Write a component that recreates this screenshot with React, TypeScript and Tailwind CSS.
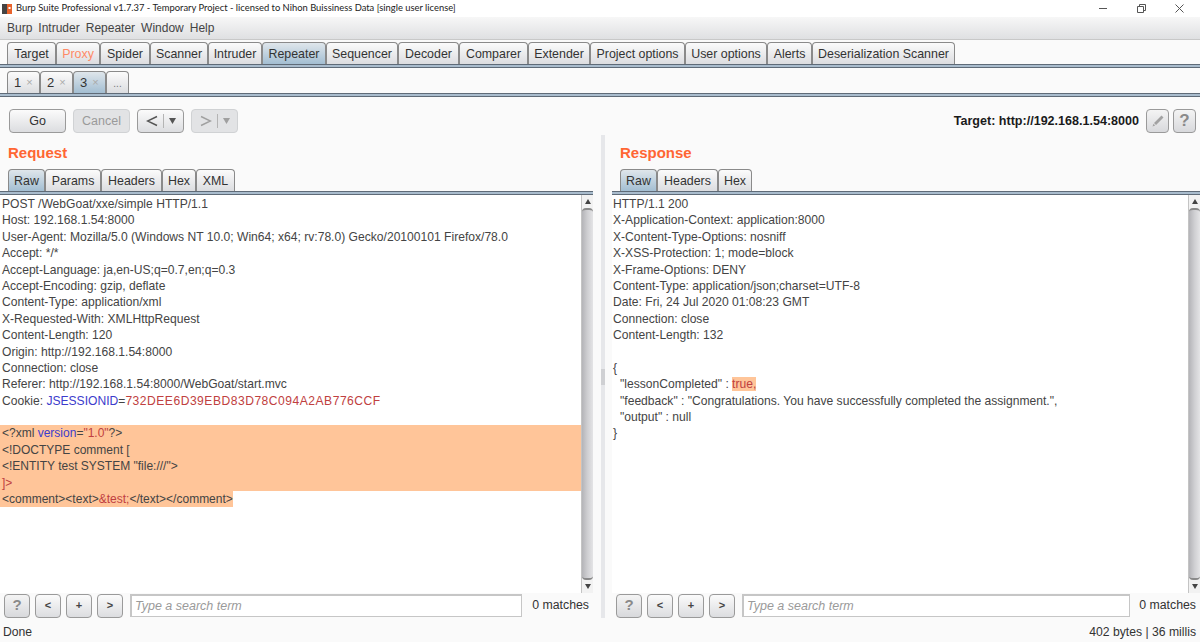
import React from 'react';

const mainTabs = [
  { label: 'Target', w: 'w-[49px]' },
  { label: 'Proxy', w: 'w-[44px]', orange: true },
  { label: 'Spider', w: 'w-[50px]' },
  { label: 'Scanner', w: 'w-[58px]' },
  { label: 'Intruder', w: 'w-[54px]' },
  { label: 'Repeater', w: 'w-[64px]', active: true },
  { label: 'Sequencer', w: 'w-[72px]' },
  { label: 'Decoder', w: 'w-[61px]' },
  { label: 'Comparer', w: 'w-[69px]' },
  { label: 'Extender', w: 'w-[62px]' },
  { label: 'Project options', w: 'w-[95px]' },
  { label: 'User options', w: 'w-[82px]' },
  { label: 'Alerts', w: 'w-[45px]' },
  { label: 'Deserialization Scanner', w: 'w-[143px]' },
];

const requestLines = [
  'POST /WebGoat/xxe/simple HTTP/1.1',
  'Host: 192.168.1.54:8000',
  'User-Agent: Mozilla/5.0 (Windows NT 10.0; Win64; x64; rv:78.0) Gecko/20100101 Firefox/78.0',
  'Accept: */*',
  'Accept-Language: ja,en-US;q=0.7,en;q=0.3',
  'Accept-Encoding: gzip, deflate',
  'Content-Type: application/xml',
  'X-Requested-With: XMLHttpRequest',
  'Content-Length: 120',
  'Origin: http://192.168.1.54:8000',
  'Connection: close',
  'Referer: http://192.168.1.54:8000/WebGoat/start.mvc',
];

const responseLines = [
  'HTTP/1.1 200',
  'X-Application-Context: application:8000',
  'X-Content-Type-Options: nosniff',
  'X-XSS-Protection: 1; mode=block',
  'X-Frame-Options: DENY',
  'Content-Type: application/json;charset=UTF-8',
  'Date: Fri, 24 Jul 2020 01:08:23 GMT',
  'Connection: close',
  'Content-Length: 132',
];

function Tab({ label, w, active, orange }: { label: string; w: string; active?: boolean; orange?: boolean }) {
  return (
    <div
      className={`${w} h-full flex items-center justify-center pt-[2px] rounded-t-[4px] border border-b-0 border-[#8a8a8a] text-[12.4px] ${
        active ? 'bg-gradient-to-b from-[#dfe6eb] to-[#a3bed2]' : 'bg-gradient-to-b from-[#fbfbfb] to-[#dcdde0]'
      } ${orange ? 'text-[#ff8a66]' : 'text-[#333333]'}`}
    >
      {label}
    </div>
  );
}

function TabLine() {
  return <div className="h-[4px] border-y border-[#5f6b78] bg-[#a9bccd]" />;
}

function Btn({ w, children, disabled }: { w: string; children: React.ReactNode; disabled?: boolean }) {
  return (
    <div
      className={`${w} h-[24px] flex items-center justify-center rounded-[4px] border text-[12.5px] ${
        disabled
          ? 'border-[#d0d2d4] bg-[#e2e3e5] text-[#9a9a9a]'
          : 'border-[#9a9a9a] bg-gradient-to-b from-[#fbfbfb] to-[#dcdde0] text-[#333333]'
      }`}
    >
      {children}
    </div>
  );
}

function SmallBtn({ w, children }: { w: string; children: React.ReactNode }) {
  return (
    <div className={`${w} h-[24px] flex items-center justify-center rounded-[4px] border border-[#9a9a9a] bg-gradient-to-b from-[#fbfbfb] to-[#dcdde0] text-[11px] font-bold text-[#444444]`}>
      {children}
    </div>
  );
}

function ArrowBtn({ dir, disabled }: { dir: 'left' | 'right'; disabled?: boolean }) {
  const stroke = disabled ? '#a0a0a0' : '#555555';
  return (
    <Btn w="w-[47px]" disabled={disabled}>
      <svg width="12" height="12" viewBox="0 0 12 12" fill="none">
        <path d={dir === 'left' ? 'M11 1.5 1.5 6 11 10.5' : 'M1 1.5 10.5 6 1 10.5'} stroke={stroke} strokeWidth="1.4" />
      </svg>
      <span className="mx-[5px] h-[14px] w-px bg-[#b4b4b4]" />
      <svg width="7" height="6" viewBox="0 0 7 6">
        <path d="M0 0h7L3.5 6z" fill={stroke} />
      </svg>
    </Btn>
  );
}

function ScrollBar() {
  return (
    <div className="w-[12px] h-full flex flex-col border-l border-[#c4c4c4] bg-[#f2f2f2]">
      <div className="h-[13px] flex items-center justify-center">
        <svg width="6" height="5" viewBox="0 0 6 5"><path d="M3 0l3 5H0z" fill="#444444" /></svg>
      </div>
      <div className="flex-1 rounded-[4px] border-y-2 border-[#8a8a8a] bg-gradient-to-r from-[#b4b4b8] via-[#cfcfd2] to-[#e4e4e6]" />
      <div className="h-[13px] flex items-center justify-center">
        <svg width="6" height="5" viewBox="0 0 6 5"><path d="M0 0h6L3 5z" fill="#444444" /></svg>
      </div>
    </div>
  );
}

function SearchRow({ inputW }: { inputW: string }) {
  return (
    <div className="h-[25px] flex items-center bg-[#fafafa]">
      <div className="flex items-center gap-[5px] pl-[4px]">
        <div className="w-[26px] h-[24px] flex items-center justify-center rounded-[4px] border border-[#9a9a9a] bg-gradient-to-b from-[#f4f4f4] to-[#d8d9dc] text-[15px] font-bold text-[#8a8a8a]">?</div>
        <SmallBtn w="w-[26px]">&lt;</SmallBtn>
        <SmallBtn w="w-[26px]">+</SmallBtn>
        <SmallBtn w="w-[26px]">&gt;</SmallBtn>
      </div>
      <div className={`${inputW} ml-[7px] h-[23px] flex items-center border border-[#c6c6c6] border-t-2 border-l-2 bg-white pl-[3px] text-[12.5px] italic text-[#9a9a9a]`}>
        Type a search term
      </div>
      <div className="flex-1 pr-[4px] text-right text-[12.3px] text-[#333333]">0 matches</div>
    </div>
  );
}

export default function App() {
  return (
    <div className="w-[1200px] h-[642px] overflow-hidden flex flex-col bg-[#fafafa] font-['Liberation_Sans',Arial,sans-serif] text-[#333333]">
      {/* title bar */}
      <div className="h-[17px] flex items-center bg-white">
        <svg width="12" height="12" viewBox="0 0 12 12" className="ml-[1px] mr-[3px]">
          <rect x="1" y="1" width="5" height="10" fill="#444444" />
          <rect x="6" y="1" width="5" height="10" fill="#e8632c" />
          <rect x="7.5" y="4" width="2" height="2" fill="#ffffff" />
        </svg>
        <span className="font-['Lato',sans-serif] text-[9.4px] text-[#222222]">
          Burp Suite Professional v1.7.37 - Temporary Project - licensed to Nihon Buissiness Data [single user license]
        </span>
        <div className="ml-auto flex items-center gap-[29px] pr-[16px]">
          <svg width="9" height="9" viewBox="0 0 9 9"><path d="M0 4.5h8" stroke="#555555" fill="none" /></svg>
          <svg width="9" height="9" viewBox="0 0 9 9"><path d="M.5 2.5h6v6h-6zM2.5 2.5v-2h6v6h-2" stroke="#555555" fill="none" /></svg>
          <svg width="9" height="9" viewBox="0 0 9 9"><path d="M.5.5l8 8M8.5.5l-8 8" stroke="#555555" fill="none" /></svg>
        </div>
      </div>

      {/* menu bar */}
      <div className="h-[23px] flex items-center gap-[6px] pl-[7px] border-b border-[#c8c8c8] bg-gradient-to-b from-[#f7f7f7] to-[#dfe0e2] text-[12px] text-[#444444]">
        <span>Burp</span>
        <span>Intruder</span>
        <span>Repeater</span>
        <span>Window</span>
        <span>Help</span>
      </div>

      {/* main tabs */}
      <div className="mt-[2px] h-[22px] flex pl-[7px]">
        {mainTabs.map((t) => (
          <Tab key={t.label} label={t.label} w={t.w} active={t.active} orange={t.orange} />
        ))}
      </div>
      <TabLine />

      {/* repeater tabs */}
      <div className="mt-[3px] h-[22px] flex pl-[7px]">
        {['1', '2', '3'].map((n) => (
          <div
            key={n}
            className={`w-[33px] h-full flex items-center gap-[5px] pl-[6px] rounded-t-[4px] border border-b-0 border-[#8a8a8a] text-[13px] ${
              n === '3' ? 'bg-gradient-to-b from-[#dfe6eb] to-[#a3bed2]' : 'bg-gradient-to-b from-[#fbfbfb] to-[#dcdde0]'
            }`}
          >
            {n}
            <span className="text-[11px] text-[#aaaaaa]">×</span>
          </div>
        ))}
        <div className="w-[23px] h-full flex items-end justify-center pb-[2px] rounded-t-[4px] border border-b-0 border-[#8a8a8a] bg-gradient-to-b from-[#fbfbfb] to-[#dcdde0] text-[10px] text-[#777777]">...</div>
      </div>
      <TabLine />

      {/* toolbar */}
      <div className="mt-[12px] h-[24px] flex items-center pl-[9px] pr-[4px]">
        <div className="flex items-center gap-[7px]">
          <Btn w="w-[57px]">Go</Btn>
          <Btn w="w-[57px]" disabled>Cancel</Btn>
          <ArrowBtn dir="left" />
          <ArrowBtn dir="right" disabled />
        </div>
        <span className="ml-auto mr-[7px] text-[12.55px] font-bold text-[#1a1a1a]">Target: http://192.168.1.54:8000</span>
        <div className="flex items-center gap-[4px]">
          <div className="w-[23px] h-[24px] flex items-center justify-center rounded-[4px] border border-[#9a9a9a] bg-gradient-to-b from-[#f4f4f4] to-[#d8d9dc]">
            <svg width="14" height="14" viewBox="0 0 14 14">
              <path d="M10.5 1.5 12.5 3.5 5 11 3 9zM2.5 9.8 4.2 11.5 1.5 12.5z" fill="#a2a2a2" />
            </svg>
          </div>
          <div className="w-[23px] h-[24px] flex items-center justify-center rounded-[4px] border border-[#9a9a9a] bg-gradient-to-b from-[#f4f4f4] to-[#d8d9dc] text-[17px] font-bold text-[#8a8a8a]">?</div>
        </div>
      </div>

      {/* split panes */}
      <div className="mt-[2px] h-[483px] flex">
        <div className="w-[593px] flex flex-col">
          <div className="h-[34px] flex items-end pb-[9px] pl-[8px] text-[15px] font-bold leading-none text-[#ff6633]">Request</div>
          <div className="h-[22px] flex pl-[8px]">
            <Tab label="Raw" w="w-[37px]" active />
            <Tab label="Params" w="w-[56px]" />
            <Tab label="Headers" w="w-[61px]" />
            <Tab label="Hex" w="w-[34px]" />
            <Tab label="XML" w="w-[39px]" />
          </div>
          <TabLine />
          <div className="h-[398px] flex bg-white">
            <div className="flex-1 pt-px text-[12.1px] leading-[16.4px] text-[#444444]">
              {requestLines.map((l) => (
                <div key={l} className="pl-[2px] h-[16.4px]">{l}</div>
              ))}
              <div className="pl-[2px] h-[16.4px]">
                Cookie: <span className="text-[#3c3ccc]">JSESSIONID</span>=<span className="tracking-[0.5px] text-[#c04040]">732DEE6D39EBD83D78C094A2AB776CCF</span>
              </div>
              <div className="h-[16.4px]" />
              <div className="bg-[#ffc599] text-[12px]">
                <div className="pl-[2px] h-[16.4px]">
                  &lt;?xml <span className="text-[#3c3ccc]">version</span>=<span className="text-[#c04040]">"1.0"</span>?&gt;
                </div>
                <div className="pl-[2px] h-[16.4px]">&lt;!DOCTYPE comment [</div>
                <div className="pl-[2px] h-[16.4px]">&lt;!ENTITY test SYSTEM "file:///"&gt;</div>
                <div className="pl-[2px] h-[16.4px] text-[#c04040]">]&gt;</div>
              </div>
              <div className="w-[233px] pl-[2px] h-[16.4px] whitespace-nowrap bg-[#ffc599] text-[12px]">
                &lt;comment&gt;&lt;text&gt;<span className="text-[#c04040]">&amp;test;</span>&lt;/text&gt;&lt;/comment&gt;
              </div>
            </div>
            <ScrollBar />
          </div>
          <SearchRow inputW="w-[392px]" />
        </div>

        <div className="w-[19px] flex items-center justify-center">
          <div className="w-[4px] h-full flex items-center bg-[#e6e7ea]">
            <div className="w-full h-[16px] bg-[#cfd0d3]" />
          </div>
        </div>

        <div className="flex-1 flex flex-col">
          <div className="h-[34px] flex items-end pb-[9px] pl-[8px] text-[15px] font-bold leading-none text-[#ff6633]">Response</div>
          <div className="h-[22px] flex pl-[8px]">
            <Tab label="Raw" w="w-[37px]" active />
            <Tab label="Headers" w="w-[61px]" />
            <Tab label="Hex" w="w-[34px]" />
          </div>
          <TabLine />
          <div className="h-[398px] flex bg-white">
            <div className="flex-1 pt-px pl-[1px] text-[12.1px] leading-[16.4px] text-[#444444]">
              {responseLines.map((l) => (
                <div key={l} className="h-[16.4px]">{l}</div>
              ))}
              <div className="h-[16.4px]" />
              <div className="h-[16.4px]">{'{'}</div>
              <div className="h-[16.4px] pl-[7px]">
                "lessonCompleted" : <span className="bg-[#ffc599] text-[#c04040]">true,</span>
              </div>
              <div className="h-[16.4px] pl-[7px]">"feedback" : "Congratulations. You have successfully completed the assignment.",</div>
              <div className="h-[16.4px] pl-[7px]">"output" : null</div>
              <div className="h-[16.4px]">{'}'}</div>
            </div>
            <ScrollBar />
          </div>
          <SearchRow inputW="w-[388px]" />
        </div>
      </div>

      {/* status bar */}
      <div className="flex-1 flex items-end justify-between pl-[3px] pr-[4px] pb-[4px] text-[12.2px] leading-none text-[#333333]">
        <span>Done</span>
        <span>402 bytes | 36 millis</span>
      </div>
    </div>
  );
}
